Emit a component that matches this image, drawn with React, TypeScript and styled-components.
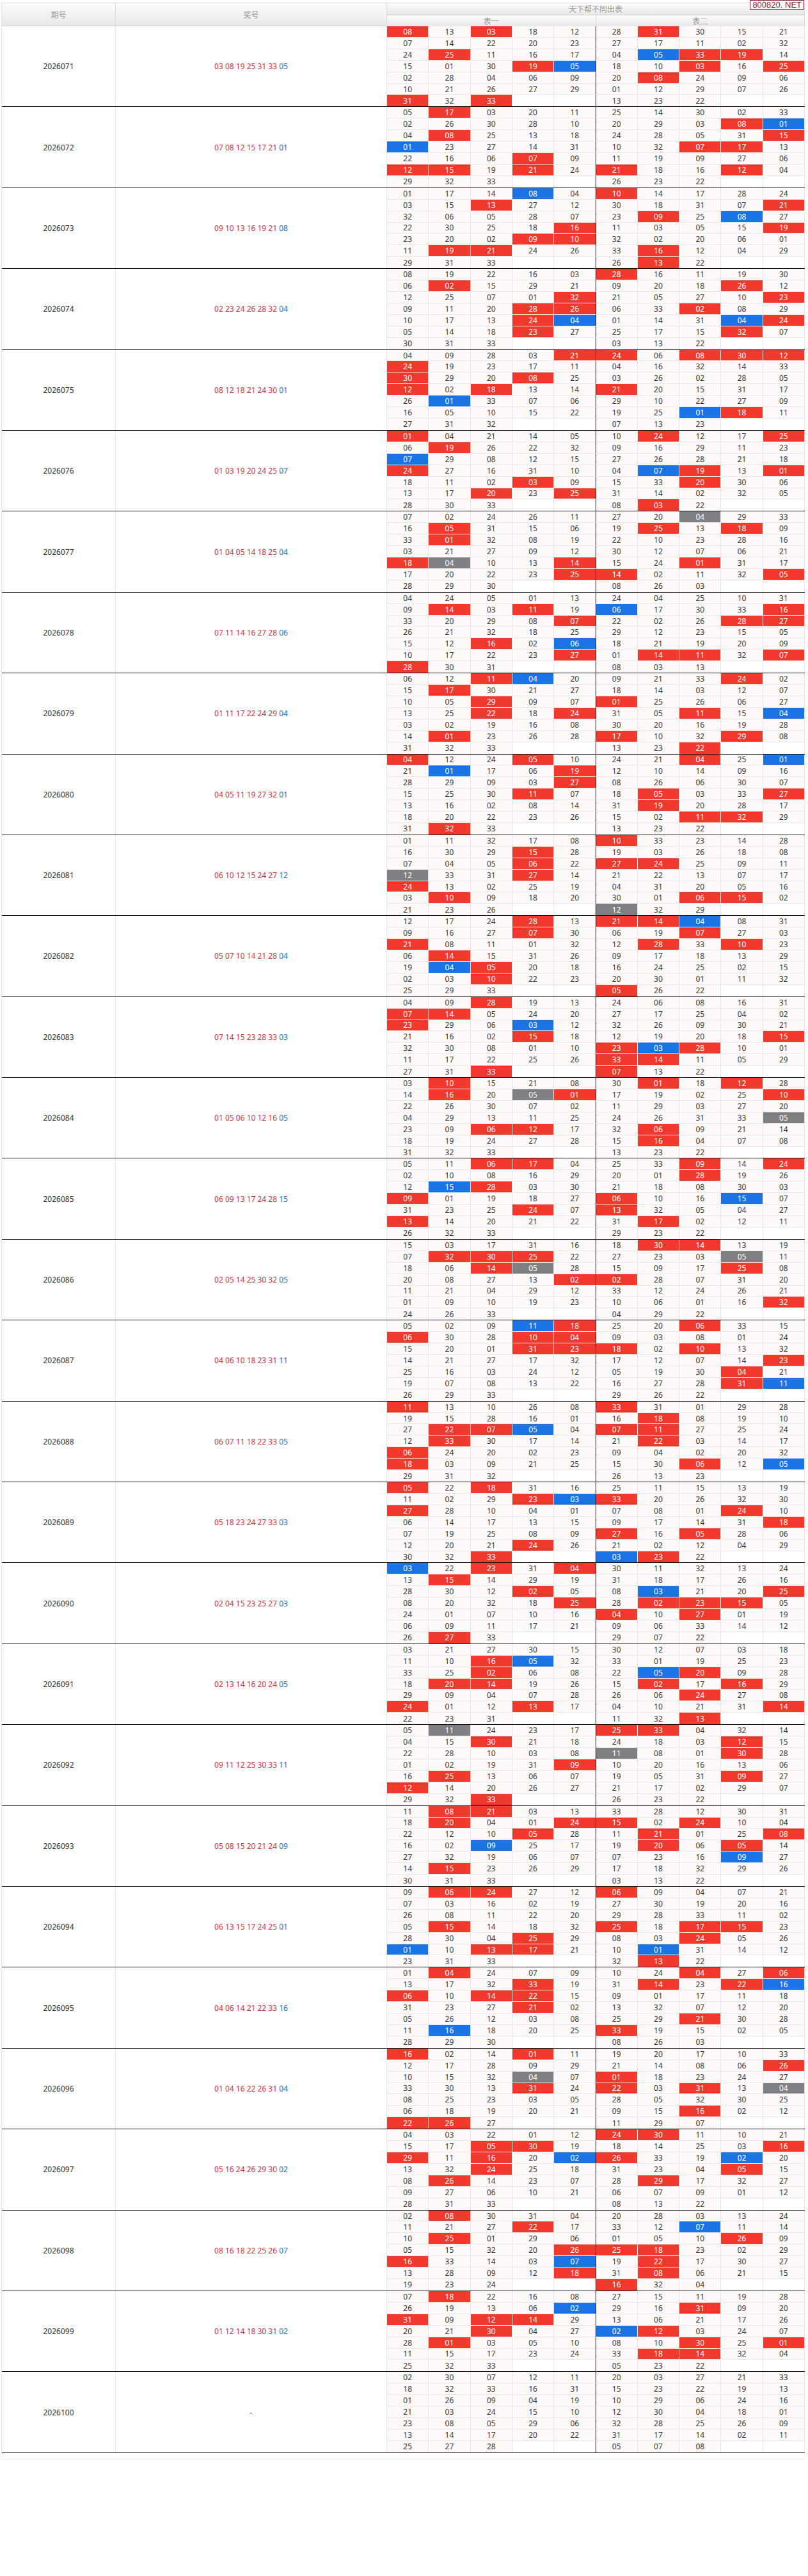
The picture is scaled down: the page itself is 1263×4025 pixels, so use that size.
import React from 'react';
import styled, { createGlobalStyle, css } from 'styled-components';

const GlobalStyle = createGlobalStyle`
  html, body {
    margin: 0;
    padding: 0;
    background: #fff;
  }
  body {
    font-family: "Noto Sans", "Noto Sans CJK SC", "Liberation Sans", sans-serif;
    font-size: 12px;
    color: #333;
  }
`;

type Row = [string, string, string, string];

// period, winning numbers (6 red + 1 blue), table one, table two (33 numbers each, row by row)
const DATA: Row[] = [
  ['2026071', '03 08 19 25 31 33 05',
    '08 13 03 18 12 07 14 22 20 23 24 25 11 16 17 15 01 30 19 05 02 28 04 06 09 10 21 26 27 29 31 32 33',
    '28 31 30 15 21 27 17 11 02 32 04 05 33 19 14 18 10 03 16 25 20 08 24 09 06 01 12 29 07 26 13 23 22'],
  ['2026072', '07 08 12 15 17 21 01',
    '05 17 03 20 11 02 26 30 28 10 04 08 25 13 18 01 23 27 14 31 22 16 06 07 09 12 15 19 21 24 29 32 33',
    '25 14 30 02 33 20 29 03 08 01 24 28 05 31 15 10 32 07 17 13 11 19 09 27 06 21 18 16 12 04 26 23 22'],
  ['2026073', '09 10 13 16 19 21 08',
    '01 17 14 08 04 03 15 13 27 12 32 06 05 28 07 22 30 25 18 16 23 20 02 09 10 11 19 21 24 26 29 31 33',
    '10 14 17 28 24 30 18 31 07 21 23 09 25 08 27 11 03 05 15 19 32 02 20 06 01 33 16 12 04 29 26 13 22'],
  ['2026074', '02 23 24 26 28 32 04',
    '08 19 22 16 03 06 02 15 29 21 12 25 07 01 32 09 11 20 28 26 10 17 13 24 04 05 14 18 23 27 30 31 33',
    '28 16 11 19 30 09 20 18 26 12 21 05 27 10 23 06 33 02 08 29 01 14 31 04 24 25 17 15 32 07 03 13 22'],
  ['2026075', '08 12 18 21 24 30 01',
    '04 09 28 03 21 24 19 23 17 11 30 29 20 08 25 12 02 18 13 14 26 01 33 07 06 16 05 10 15 22 27 31 32',
    '24 06 08 30 12 04 16 32 14 33 03 26 02 28 05 21 20 15 31 17 29 10 22 27 09 19 25 01 18 11 07 13 23'],
  ['2026076', '01 03 19 20 24 25 07',
    '01 04 21 14 05 06 19 26 22 32 07 29 08 12 15 24 27 16 31 10 18 11 02 03 09 13 17 20 23 25 28 30 33',
    '10 24 12 17 25 09 16 29 11 23 27 26 28 21 18 04 07 19 13 01 15 33 20 30 06 31 14 02 32 05 08 03 22'],
  ['2026077', '01 04 05 14 18 25 04',
    '07 02 24 26 11 16 05 31 15 06 33 01 32 08 19 03 21 27 09 12 18 04 10 13 14 17 20 22 23 25 28 29 30',
    '27 20 04 29 33 19 25 13 18 09 22 10 23 28 16 30 12 07 06 21 15 24 01 31 17 14 02 11 32 05 08 26 03'],
  ['2026078', '07 11 14 16 27 28 06',
    '04 24 05 01 13 09 14 03 11 19 33 20 29 08 07 26 21 32 18 25 15 12 16 02 06 10 17 22 23 27 28 30 31',
    '24 04 25 10 31 06 17 30 33 16 22 02 26 28 27 29 12 23 15 05 18 21 19 20 09 01 14 11 32 07 08 03 13'],
  ['2026079', '01 11 17 22 24 29 04',
    '06 12 11 04 20 15 17 30 21 27 10 05 29 09 07 13 25 22 18 24 03 02 19 16 08 14 01 23 26 28 31 32 33',
    '09 21 33 24 02 18 14 03 12 07 01 25 26 06 27 31 05 11 15 04 30 20 16 19 28 17 10 32 29 08 13 23 22'],
  ['2026080', '04 05 11 19 27 32 01',
    '04 12 24 05 10 21 01 17 06 19 28 29 09 03 27 15 25 30 11 07 13 16 02 08 14 18 20 22 23 26 31 32 33',
    '24 21 04 25 01 12 10 14 09 16 08 26 06 30 07 18 05 03 33 27 31 19 20 28 17 15 02 11 32 29 13 23 22'],
  ['2026081', '06 10 12 15 24 27 12',
    '01 11 32 17 08 16 30 29 15 28 07 04 05 06 22 12 33 31 27 14 24 13 02 25 19 03 10 09 18 20 21 23 26',
    '10 33 23 14 28 19 03 26 18 08 27 24 25 09 11 21 22 13 07 17 04 31 20 05 16 30 01 06 15 02 12 32 29'],
  ['2026082', '05 07 10 14 21 28 04',
    '12 17 24 28 13 09 16 27 07 30 21 08 11 01 32 06 14 15 31 26 19 04 05 20 18 02 03 10 22 23 25 29 33',
    '21 14 04 08 31 06 19 07 27 03 12 28 33 10 23 09 17 18 13 29 16 24 25 02 15 20 30 01 11 32 05 26 22'],
  ['2026083', '07 14 15 23 28 33 03',
    '04 09 28 19 13 07 14 05 24 20 23 29 06 03 12 21 16 02 15 18 32 30 08 01 10 11 17 22 25 26 27 31 33',
    '24 06 08 16 31 27 17 25 04 02 32 26 09 30 21 12 19 20 18 15 23 03 28 10 01 33 14 11 05 29 07 13 22'],
  ['2026084', '01 05 06 10 12 16 05',
    '03 10 15 21 08 14 16 20 05 01 22 26 30 07 02 04 29 13 11 25 23 09 06 12 17 18 19 24 27 28 31 32 33',
    '30 01 18 12 28 17 19 02 25 10 11 29 03 27 20 24 26 31 33 05 32 06 09 21 14 15 16 04 07 08 13 23 22'],
  ['2026085', '06 09 13 17 24 28 15',
    '05 11 06 17 04 02 10 08 16 29 12 15 28 03 30 09 01 19 18 27 31 23 25 24 07 13 14 20 21 22 26 32 33',
    '25 33 09 14 24 20 01 28 19 26 21 18 08 30 03 06 10 16 15 07 13 32 05 04 27 31 17 02 12 11 29 23 22'],
  ['2026086', '02 05 14 25 30 32 05',
    '15 03 17 31 16 07 32 30 25 22 18 06 14 05 28 20 08 27 13 02 11 21 04 29 12 01 09 10 19 23 24 26 33',
    '18 30 14 13 19 27 23 03 05 11 15 09 17 25 08 02 28 07 31 20 33 12 24 26 21 10 06 01 16 32 04 29 22'],
  ['2026087', '04 06 10 18 23 31 11',
    '05 02 09 11 18 06 30 28 10 04 15 20 01 31 23 14 21 27 17 32 25 16 03 24 12 19 07 08 13 22 26 29 33',
    '25 20 06 33 15 09 03 08 01 24 18 02 10 13 32 17 12 07 14 23 05 19 30 04 21 16 27 28 31 11 29 26 22'],
  ['2026088', '06 07 11 18 22 33 05',
    '11 13 10 26 08 19 15 28 16 01 27 22 07 05 04 12 33 30 17 14 06 24 20 02 23 18 03 09 21 25 29 31 32',
    '33 31 01 29 28 16 18 08 19 10 07 11 27 25 24 21 22 03 14 17 09 04 02 20 32 15 30 06 12 05 26 13 23'],
  ['2026089', '05 18 23 24 27 33 03',
    '05 22 18 31 16 11 02 29 23 03 27 28 10 04 01 06 14 17 13 15 07 19 25 08 09 12 20 21 24 26 30 32 33',
    '25 11 15 13 19 33 20 26 32 30 07 08 01 24 10 09 17 14 31 18 27 16 05 28 06 21 02 12 04 29 03 23 22'],
  ['2026090', '02 04 15 23 25 27 03',
    '03 22 23 31 04 13 15 14 29 19 28 30 12 02 05 08 20 32 18 25 24 01 07 10 16 06 09 11 17 21 26 27 33',
    '30 11 32 13 24 31 18 17 26 16 08 03 21 20 25 28 02 23 15 05 04 10 27 01 19 09 06 33 14 12 29 07 22'],
  ['2026091', '02 13 14 16 20 24 05',
    '03 21 27 30 15 11 10 16 05 32 33 25 02 06 08 18 20 14 19 26 29 09 04 07 28 24 01 12 13 17 22 23 31',
    '30 12 07 03 18 33 01 19 25 23 22 05 20 09 28 15 02 17 16 29 26 06 24 27 08 04 10 21 31 14 11 32 13'],
  ['2026092', '09 11 12 25 30 33 11',
    '05 11 24 23 17 04 15 30 21 18 22 28 10 03 08 01 02 19 31 09 16 25 13 06 07 12 14 20 26 27 29 32 33',
    '25 33 04 32 14 24 18 03 12 15 11 08 01 30 28 10 20 16 13 06 19 05 31 09 27 21 17 02 29 07 26 23 22'],
  ['2026093', '05 08 15 20 21 24 09',
    '11 08 21 03 13 18 20 04 01 24 22 12 10 05 28 16 02 09 25 17 27 32 19 06 07 14 15 23 26 29 30 31 33',
    '33 28 12 30 31 15 02 24 10 04 11 21 01 25 08 19 20 06 05 14 07 23 16 09 27 17 18 32 29 26 03 13 22'],
  ['2026094', '06 13 15 17 24 25 01',
    '09 06 24 27 12 07 03 16 02 19 26 08 11 22 20 05 15 14 18 32 28 30 04 25 29 01 10 13 17 21 23 31 33',
    '06 09 04 07 21 27 30 19 20 16 29 28 33 11 02 25 18 17 15 23 08 03 24 05 26 10 01 31 14 12 32 13 22'],
  ['2026095', '04 06 14 21 22 33 16',
    '01 04 24 07 09 13 17 32 33 19 06 10 14 22 15 31 23 27 21 02 05 26 12 03 08 11 16 18 20 25 28 29 30',
    '10 24 04 27 06 31 14 23 22 16 09 01 17 11 18 13 32 07 12 20 25 29 21 30 28 33 19 15 02 05 08 26 03'],
  ['2026096', '01 04 16 22 26 31 04',
    '16 02 14 01 11 12 17 28 09 29 10 15 32 04 07 33 30 13 31 24 08 25 23 03 05 06 18 19 20 21 22 26 27',
    '19 20 17 10 33 21 14 08 06 26 01 18 23 24 27 22 03 31 13 04 28 05 32 30 25 09 15 16 02 12 11 29 07'],
  ['2026097', '05 16 24 26 29 30 02',
    '04 03 22 01 12 15 17 05 30 19 29 11 16 20 02 13 32 24 25 18 08 26 14 23 07 09 27 06 10 21 28 31 33',
    '24 30 11 10 21 18 14 25 03 16 26 33 19 02 20 31 23 04 05 15 28 29 17 32 27 06 07 09 01 12 08 13 22'],
  ['2026098', '08 16 18 22 25 26 07',
    '02 08 30 31 04 11 21 27 22 17 10 25 01 29 06 05 15 32 20 26 16 33 14 03 07 13 28 09 12 18 19 23 24',
    '20 28 03 13 24 33 12 07 11 14 01 05 10 26 09 25 18 23 02 29 19 22 17 30 27 31 08 06 21 15 16 32 04'],
  ['2026099', '01 12 14 18 30 31 02',
    '07 18 22 16 08 26 19 13 06 02 31 09 12 14 29 20 21 30 04 27 28 01 03 05 10 11 15 17 23 24 25 32 33',
    '27 15 11 19 28 29 16 31 09 20 13 06 21 17 26 02 12 03 24 07 08 10 30 25 01 33 18 14 32 04 05 23 22'],
  ['2026100', '-',
    '02 30 07 12 11 18 32 33 16 31 01 26 09 04 19 21 03 24 15 10 23 08 05 29 06 13 14 17 20 22 25 27 28',
    '20 03 27 21 33 15 23 22 19 13 10 29 06 24 16 12 30 04 18 01 32 28 25 26 09 31 17 14 02 11 05 07 08'],
];

type Kind = 'plain' | 'red' | 'blue' | 'grey' | 'empty';

const Page = styled.div`
  position: relative;
  min-height: 4025px;
  padding: 4px 0 0 2px;
  box-sizing: border-box;
`;

const Brand = styled.div`
  position: absolute;
  top: 0;
  right: 6px;
  height: 15px;
  padding: 0 3px;
  border: 1px solid #8c2334;
  background: #fff;
  color: #8c1d2e;
  font-family: "Liberation Sans", "Noto Sans", sans-serif;
  font-size: 13px;
  line-height: 15px;
  box-sizing: border-box;
  display: flex;
  align-items: center;
`;

const Sheet = styled.div`
  width: 1256px;
  border-left: 1px solid #e2e2e2;
  box-sizing: border-box;
`;

const Head = styled.div`
  display: flex;
  height: 37px;
  border-top: 1px solid #e0e0e0;
  box-sizing: border-box;
`;

const HeadCell = styled.div<{ $w?: number }>`
  ${(p) => (p.$w ? css`width: ${p.$w}px; flex: none;` : css`flex: 1;`)}
  display: flex;
  align-items: center;
  justify-content: center;
  background: linear-gradient(#fdfdfd, #e7e7e7);
  border-right: 1px solid #d9d9d9;
  border-bottom: 1px solid #cdcdcd;
  color: #9a9a9a;
  font-size: 12px;
  box-sizing: border-box;
`;

const HeadGroup = styled.div`
  flex: 1;
  display: flex;
  flex-direction: column;
`;

const HeadRow = styled.div`
  flex: 1;
  display: flex;
`;

const Block = styled.div`
  display: flex;
  height: 126.4px;
  border-bottom: 1px solid #111;
  box-sizing: border-box;
`;

const SideCell = styled.div<{ $w: number }>`
  width: ${(p) => p.$w}px;
  flex: none;
  display: flex;
  align-items: center;
  justify-content: center;
  border-right: 1px solid #e4e4e4;
  background: #fff;
  color: #333;
  font-size: 12px;
  box-sizing: border-box;
`;

const BallLine = styled.span`
  white-space: pre;
`;

const Ball = styled.span<{ $blue?: boolean }>`
  color: ${(p) => (p.$blue ? '#2a6bc4' : '#d5323f')};
`;

const Board = styled.div`
  flex: 1;
  display: grid;
  grid-template-columns: repeat(10, 1fr);
  grid-template-rows: repeat(7, 1fr);
`;

const kindColors: Record<Kind, string> = {
  plain: '#fcf9f8',
  empty: '#ffffff',
  red: '#f2392d',
  blue: '#1a74e6',
  grey: '#7e8083',
};

const Cell = styled.div<{ $kind: Kind; $split: boolean; $last: boolean }>`
  display: flex;
  align-items: center;
  justify-content: center;
  background: ${(p) => kindColors[p.$kind]};
  color: ${(p) => (p.$kind === 'plain' ? '#3a3a3a' : '#fff')};
  border-right: 1px solid ${(p) => (p.$split ? '#000' : '#e7e3e3')};
  border-bottom: ${(p) => (p.$last ? 'none' : '1px solid #ebe8e8')};
  font-size: 12px;
  box-sizing: border-box;
  overflow: hidden;
`;

const Tail = styled.div`
  width: 1256px;
  margin-top: 9px;
  border-top: 1px solid #e6e6e6;
`;

function boardCells(t1: string, t2: string): string[] {
  const left = [...t1.split(' '), '', ''];
  const right = [...t2.split(' '), '', ''];
  const out: string[] = [];
  for (let r = 0; r < 7; r++) {
    out.push(...left.slice(r * 5, r * 5 + 5), ...right.slice(r * 5, r * 5 + 5));
  }
  return out;
}

function Issue({ row }: { row: Row }) {
  const [period, balls, t1, t2] = row;
  const nums = balls === '-' ? [] : balls.split(' ');
  const reds = new Set(nums.slice(0, 6));
  const blue = nums[6];
  const cells = boardCells(t1, t2);

  const kindOf = (n: string): Kind => {
    if (!n) return 'empty';
    const r = reds.has(n);
    const b = n === blue;
    if (r && b) return 'grey';
    if (r) return 'red';
    if (b) return 'blue';
    return 'plain';
  };

  return (
    <Block>
      <SideCell $w={178}>{period}</SideCell>
      <SideCell $w={424}>
        <BallLine>
          {nums.length === 0
            ? '-'
            : nums.map((n, i) => (
                <React.Fragment key={i}>
                  <Ball $blue={i === 6}>{n}</Ball>
                  {i < 6 ? ' ' : ''}
                </React.Fragment>
              ))}
        </BallLine>
      </SideCell>
      <Board>
        {cells.map((n, i) => (
          <Cell key={i} $kind={kindOf(n)} $split={i % 10 === 4} $last={i >= 60}>
            {n}
          </Cell>
        ))}
      </Board>
    </Block>
  );
}

export default function App() {
  return (
    <Page>
      <GlobalStyle />
      <Sheet>
        <Head>
          <HeadCell $w={178}>期号</HeadCell>
          <HeadCell $w={424}>奖号</HeadCell>
          <HeadGroup>
            <HeadRow>
              <HeadCell>天下帮不同出表</HeadCell>
            </HeadRow>
            <HeadRow>
              <HeadCell>表一</HeadCell>
              <HeadCell>表二</HeadCell>
            </HeadRow>
          </HeadGroup>
        </Head>
        {DATA.map((row) => (
          <Issue key={row[0]} row={row} />
        ))}
      </Sheet>
      <Tail />
      <Brand>800820. NET</Brand>
    </Page>
  );
}
